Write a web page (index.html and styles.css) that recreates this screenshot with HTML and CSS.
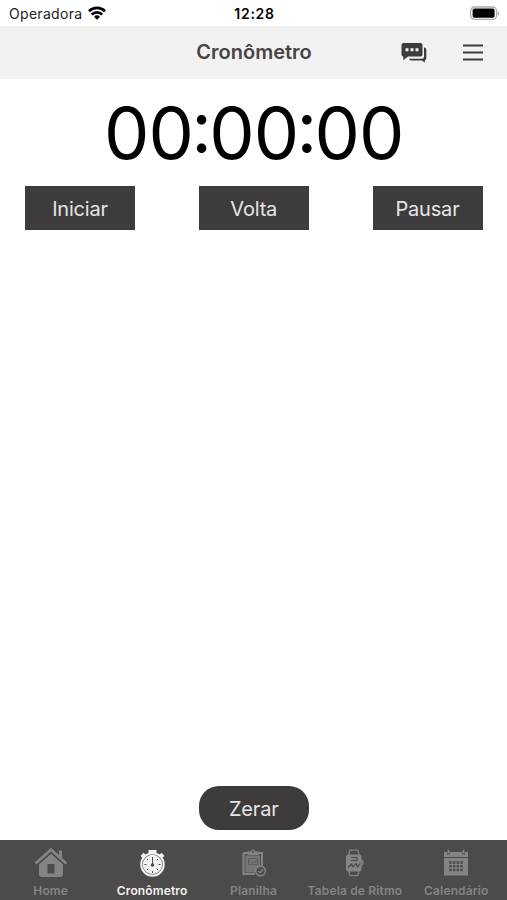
FILE: index.html
```html
<!DOCTYPE html>
<html lang="pt-BR">
<head>
    <meta charset="UTF-8">
    <meta name="viewport" content="width=device-width, initial-scale=1.0">
    <title>Cronômetro</title>
    <link rel="stylesheet" href="styles.css">
</head>
<body>
    <div class="app">
        <div class="status-bar">
            <div class="carrier">
                <span>Operadora</span>
                <svg width="18" height="14" viewBox="0 0 18 14" fill="none" stroke="#000" stroke-width="2.7">
                    <path d="M0.9 5.2a11.5 11.5 0 0 1 16.2 0"/>
                    <path d="M3.8 8.5a7.4 7.4 0 0 1 10.4 0"/>
                    <path d="M9 13.8L6 10.8a4.3 4.3 0 0 1 6 0z" fill="#000" stroke="none"/>
                </svg>
            </div>
            <div class="time">12:28</div>
            <div class="battery">
                <svg width="31" height="15" viewBox="0 0 31 15">
                    <rect x="1.6" y="1" width="26" height="12.4" rx="4" fill="#fff" stroke="#aaa" stroke-width="1.3"/>
                    <rect x="3.6" y="2.6" width="22" height="9.2" rx="1.8" fill="#000"/>
                    <path d="M29 5.200c2 1 2 3.200 0 4.200z" fill="#aaa"/>
                </svg>
            </div>
        </div>

        <div class="navbar">
            <h1>Cronômetro</h1>
            <div class="actions">
                <svg width="26" height="20" viewBox="0 0 26 20">
                    <path d="M2.5 0h17A2 2 0 0 1 21.500 2v9.500a2 2 0 0 1-2 2H7L2.300 17.200V13.500A2 2 0 0 1 .5 11.500V2a2 2 0 0 1 2-2z" fill="#3d3b3c"/>
                    <path d="M4.500 5.300h3v3h-3zM9.500 5.300h3v3h-3zM14.500 5.300h3v3h-3z" fill="#f1f1f1"/>
                    <path d="M23 4.500h.3a2 2 0 0 1 2 2v8.700a2 2 0 0 1-1.500 2V19.400l-3-2H10a2 2 0 0 1-2-1.700h13a2 2 0 0 0 2-2z" fill="#3d3b3c"/>
                </svg>
                <svg width="20" height="17" viewBox="0 0 20 17" stroke="#3d3b3c" stroke-width="1.900">
                    <path d="M0 1.500h20M0 8.500h20M0 15.500h20"/>
                </svg>
            </div>
        </div>

        <div class="content">
            <div class="timer">00<span class="colon">:</span>00<span class="colon">:</span>00</div>
            <div class="buttons">
                <button>Iniciar</button>
                <button>Volta</button>
                <button>Pausar</button>
            </div>
            <button class="reset">Zerar</button>
        </div>

        <div class="tabs">
            <a class="tab" href="#">
                <svg width="34" height="32" viewBox="0 0 34 32" fill="#858484">
                    <path d="M17 .8L25 8V3.500h3v7.200l5.300 4.800-1.800 2L17 4.600 2.500 17.500l-1.800-2z"/>
                    <path fill-rule="evenodd" d="M17 6.800L29 17.400V27a3 3 0 0 1-3 3H8a3 3 0 0 1-3-3V17.400zM13.500 17v9.500h7V17z"/>
                </svg>
                <span>Home</span>
            </a>
            <a class="tab active" href="#">
                <svg width="34" height="32" viewBox="0 0 34 32">
                    <path d="M13.500 3h8v3H19v3h-3V6h-2.500zM5.500 9l3-3.200 3 2.500-3 3.200zM23.500 8.300l3-2.500 3 3.200-3 2.500z" fill="#f1f1f1"/>
                    <circle cx="17.500" cy="17.500" r="11.300" fill="#6a6869" stroke="#f1f1f1" stroke-width="1.900"/>
                    <circle cx="17.500" cy="17.500" r="9.700" fill="#f1f1f1"/>
                    <path d="M17.500 10v8M17.500 24v2M9.500 17.500h2M23.500 17.500h2M12 12l1.200 1.200M23 12l-1.200 1.200M12 23l1.200-1.200M23 23l-1.200-1.200" stroke="#4c4a4b" stroke-width="1"/>
                    <circle cx="17.500" cy="18" r="1.700" fill="#4c4a4b"/>
                </svg>
                <span>Cronômetro</span>
            </a>
            <a class="tab" href="#">
                <svg width="34" height="32" viewBox="0 0 34 32">
                    <path d="M6.500 6h18.500V21M18 27H6.500V6" fill="none" stroke="#858484" stroke-width="2"/>
                    <path d="M8.500 8.500h14.500v11l-5 6H8.500z" fill="#777576"/>
                    <path d="M10.500 8V4.500h3a2.600 2.600 0 0 1 5 0h3V8z" fill="#858484"/>
                    <circle cx="16" cy="4.800" r="1" fill="#4c4a4b"/>
                    <path d="M11.500 11.500h9v6h-9zM11.500 13l4 3 5-3" fill="none" stroke="#5c5a5b" stroke-width=".9"/>
                    <circle cx="23.500" cy="24" r="4.800" fill="#4c4a4b" stroke="#858484" stroke-width="1.500"/>
                    <path d="M21.300 24l1.700 1.700 3-3.500" fill="none" stroke="#858484" stroke-width="1.300"/>
                </svg>
                <span>Planilha</span>
            </a>
            <a class="tab" href="#">
                <svg width="34" height="32" viewBox="0 0 34 32">
                    <path d="M10.500 8.500l1.300-5.300h8l1.300 5.300M10.500 23l1.300 5.600h8L21.100 23" fill="none" stroke="#858484" stroke-width="1.300"/>
                    <rect x="8" y="7.500" width="15.500" height="17" rx="2.500" fill="#858484"/>
                    <path d="M23.500 12l2 2v3l-2 2z" fill="#858484"/>
                    <path d="M13 10.500h6v3h-6M10 20.500l3.500-3.500 1.500 3 3-3.500 1.500 3.500 2.500-3.500" fill="none" stroke="#4c4a4b" stroke-width="1.200"/>
                </svg>
                <span>Tabela de Ritmo</span>
            </a>
            <a class="tab" href="#">
                <svg width="34" height="32" viewBox="0 0 34 32">
                    <path d="M5 5h3v2.500h3V5h12v2.500h3V5h3v5H5zM8.500 3h2v3.500h-2zM23.500 3h2v3.500h-2zM5 11h24v17.500H5z" fill="#858484"/>
                    <path d="M10.200 15.500h13.600M10.200 19.200h13.600M10.200 22.900h13.600" stroke="#4c4a4b" stroke-width="2.500" stroke-dasharray="2.500 1.200"/>
                </svg>
                <span>Calendário</span>
            </a>
        </div>
    </div>
</body>
</html>
```
FILE: styles.css
```css
body {
    margin: 0;
    font-family: 'Inter', 'Liberation Sans', sans-serif;
    background: #fff;
}

.app {
    height: 100vh;
    display: flex;
    flex-direction: column;
}

.status-bar {
    height: 26px;
    display: grid;
    grid-template-columns: 1fr auto 1fr;
    align-items: center;
    padding: 0 7px 0 9px;
    box-sizing: border-box;
    font-size: 14px;
    color: #222;
}

.carrier {
    display: flex;
    align-items: center;
    gap: 6px;
    letter-spacing: 0.3px;
}

.carrier svg {
    margin-bottom: 1px;
}

.time {
    font-weight: 600;
    letter-spacing: 0.7px;
    color: #000;
}

.battery {
    display: flex;
    justify-content: flex-end;
}

.navbar {
    height: 53px;
    display: grid;
    grid-template-columns: 1fr auto 1fr;
    align-items: center;
    padding: 0 24px;
    background: #f1f1f1;
    color: #464445;
}

.navbar h1 {
    grid-column: 2;
    margin: 0 0 1px 1px;
    font-size: 20px;
    font-weight: 600;
}

.actions {
    display: flex;
    align-items: center;
    justify-content: flex-end;
    gap: 36px;
}

.content {
    flex: 1;
    display: flex;
    flex-direction: column;
    padding: 12px 24.5px 10px 25px;
}

.timer {
    height: 82px;
    line-height: 83px;
    margin-bottom: 13px;
    text-align: center;
    font-size: 72px;
    letter-spacing: -0.9px;
    color: #000;
}

/* raise the colon to the middle of the digits */
.timer .colon {
    margin: 0 -1.8px;
    line-height: 0;
    vertical-align: 6px;
}

.buttons {
    display: flex;
    justify-content: space-between;
}

button {
    width: 110px;
    height: 44px;
    padding: 2px 0 0;
    border: none;
    font-family: inherit;
    font-size: 20px;
    letter-spacing: -0.2px;
    background: #3d3b3c;
    color: #e6e6e6;
}

.reset {
    align-self: center;
    margin-top: auto;
    border-radius: 20px;
}

.tabs {
    height: 60px;
    display: flex;
    background: #4c4a4b;
}

.tab {
    flex: 1;
    display: flex;
    flex-direction: column;
    align-items: center;
    padding-top: 7px;
    text-decoration: none;
    white-space: nowrap;
    font-size: 12px;
    font-weight: 600;
    line-height: 15px;
    letter-spacing: 0.15px;
    color: #858484;
}

.tab span {
    margin-top: 4px;
}

.tab.active {
    color: #f1f1f1;
}
```
